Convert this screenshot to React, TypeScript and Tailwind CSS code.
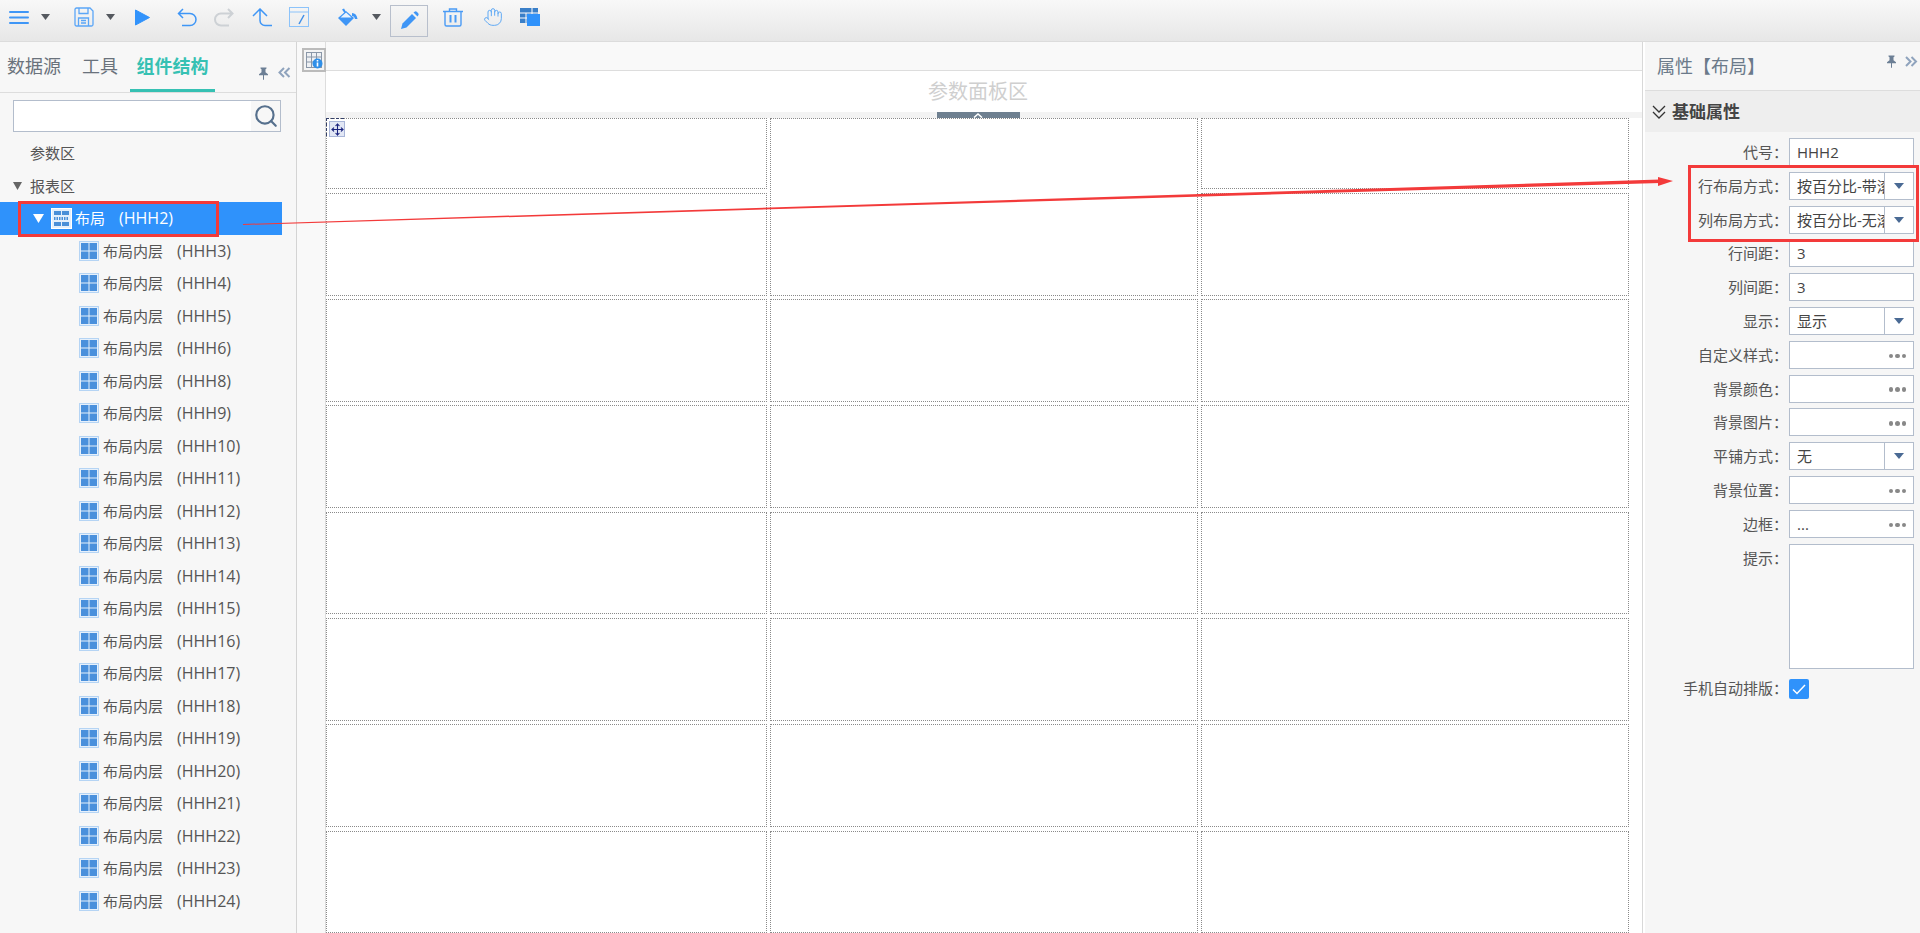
import { Hand, Move, Search } from "lucide-react";

const innerIds = [3, 4, 5, 6, 8, 9, 10, 11, 12, 13, 14, 15, 16, 17, 18, 19, 20, 21, 22, 23, 24];

function Caret({ color = "#55595f", w = 9, h = 6 }: { color?: string; w?: number; h?: number }) {
  return (
    <svg width={w} height={h} viewBox="0 0 10 6" preserveAspectRatio="none" className="block shrink-0">
      <polygon points="0,0 10,0 5,6" fill={color} />
    </svg>
  );
}

function PinIcon({ color }: { color: string }) {
  return (
    <svg width="11" height="13" viewBox="0 0 11 13" className="block">
      <path d="M2.5 0.5h6v1l-1 .8v3l2.5 2v1H6v4.2l-.5.5-.5-.5V8.300H1v-1l2.500-2v-3l-1-.8z" fill={color} />
    </svg>
  );
}

function DoubleArrow({ dir }: { dir: "left" | "right" }) {
  const d = dir === "left" ? "M6 1 L1.500 5.500 L6 10 M11.500 1 L7 5.500 L11.500 10" : "M1 1 L5.500 5.500 L1 10 M6.500 1 L11 5.500 L6.500 10";
  return (
    <svg width="13" height="11" viewBox="0 0 13 11" fill="none" stroke="#8fa3bd" strokeWidth="2" className="block">
      <path d={d} />
    </svg>
  );
}

function LayerIcon() {
  return (
    <svg width="20" height="20" viewBox="0 0 20 20" className="block shrink-0">
      <rect x="0.500" y="0.500" width="19" height="19" fill="#e6f0fb" stroke="#7db4ee" strokeDasharray="1 1" />
      <rect x="2" y="2" width="7.500" height="7.500" fill="#4a90dc" />
      <rect x="10.500" y="2" width="7.500" height="7.500" fill="#4a90dc" />
      <rect x="2" y="10.500" width="7.500" height="7.500" fill="#4a90dc" />
      <rect x="10.500" y="10.500" width="7.500" height="7.500" fill="#4a90dc" />
    </svg>
  );
}

function RootIcon() {
  return (
    <svg width="21" height="21" viewBox="0 0 21 21" className="block shrink-0">
      <rect x="0.500" y="0.500" width="20" height="20" fill="#e4effb" stroke="#ffffff" />
      <rect x="3" y="3" width="7" height="4" fill="#4a8fd8" />
      <rect x="11" y="3" width="7" height="4" fill="#4a8fd8" />
      <path d="M3 10.500h15" stroke="#4a8fd8" strokeWidth="3" strokeDasharray="1.500 1" />
      <rect x="3" y="14" width="7" height="4" fill="#4a8fd8" />
      <rect x="11" y="14" width="7" height="4" fill="#4a8fd8" />
    </svg>
  );
}

function Toolbar() {
  return (
    <div className="flex h-[42px] shrink-0 items-center border-b border-[#dcdcdc] bg-gradient-to-b from-[#f8f8f8] to-[#e7e7e7] pl-[9px] pb-[7px]">
      <svg width="20" height="13" viewBox="0 0 20 13" className="block">
        <rect y="0" width="20" height="2" rx="1" fill="#3f96f6" />
        <rect y="5.500" width="20" height="2" rx="1" fill="#3f96f6" />
        <rect y="11" width="20" height="2" rx="1" fill="#3f96f6" />
      </svg>
      <div className="ml-[12px]"><Caret /></div>
      <svg width="20" height="20" viewBox="0 0 20 20" fill="none" className="ml-[24px] block" stroke="#5ba6f7" strokeWidth="1.300">
        <path d="M1 2.500a1.500 1.500 0 0 1 1.500-1.500h13.500l3 3v13.500a1.500 1.500 0 0 1-1.500 1.500h-15a1.500 1.500 0 0 1-1.500-1.500z" />
        <path d="M5 1v5.500h9V1M4.500 19v-8h10v8M7 13.500h5M7 16h5" />
      </svg>
      <div className="ml-[12px]"><Caret /></div>
      <svg width="15" height="17" viewBox="0 0 15 17" className="ml-[20px] block">
        <path d="M0.500 1 L14.500 8.500 L0.500 16 Z" fill="#3293fb" stroke="#3293fb" strokeLinejoin="round" />
      </svg>
      <svg width="20" height="19" viewBox="0 0 20 19" fill="none" stroke="#3f96f6" strokeWidth="1.500" className="ml-[27px] block">
        <path d="M6 1 L1.500 5.500 L6 10 M1.500 5.500 H13 a6 6 0 0 1 0 12 H5" />
      </svg>
      <svg width="20" height="19" viewBox="0 0 20 19" fill="none" stroke="#cdd1d5" strokeWidth="2" className="ml-[17px] block">
        <path d="M14 1 L18.500 5.500 L14 10 M18.500 5.500 H7 a6 6 0 0 0 0 12 H15" />
      </svg>
      <svg width="20" height="19" viewBox="0 0 20 19" fill="none" stroke="#3f96f6" strokeWidth="1.500" className="ml-[18px] block">
        <path d="M1 8 L8 1 L15 8 M8 1 V12.500 a5 5 0 0 0 5 5 H20" />
      </svg>
      <svg width="20" height="20" viewBox="0 0 20 20" fill="none" className="ml-[17px] block">
        <rect x="0.500" y="0.500" width="19" height="19" stroke="#8cc3fa" />
        <path d="M0.500 5h19" stroke="#8cc3fa" />
        <path d="M10 17 L15 8" stroke="#3f8fe8" strokeWidth="1.500" />
      </svg>
      <svg width="21" height="19" viewBox="0 0 21 19" className="ml-[28px] block">
        <path d="M1 10 L9 3 L17 10 L9 18 Z" fill="#3f96f6" />
        <path d="M3.500 9.500h11L9 4.500z" fill="#e9f3fe" />
        <path d="M5 1.500 L7 0.500 L9 4 L7.500 5z" fill="#3f96f6" />
        <path d="M15 5 C18 5 20 7 20.500 11 L18 11 C17.500 9 16.500 8 15 8z" fill="#3f96f6" />
      </svg>
      <div className="ml-[14px]"><Caret /></div>
      <div className="ml-[9px] mt-[7px] flex h-[32px] w-[38px] items-center justify-center border border-[#b8bfcc]">
        <svg width="19" height="19" viewBox="0 0 19 19" className="block">
          <path d="M1 18 L2.500 12.500 L12 3 L16 7 L6.500 16.500 Z" fill="#3f96f6" />
          <path d="M13.500 1.500 L15 0.500 Q16 0 17 1 L18 2 Q19 3 18.500 4 L17.500 5.500 Z" fill="#3f96f6" />
        </svg>
      </div>
      <svg width="20" height="19" viewBox="0 0 20 19" fill="none" stroke="#4a9bf5" strokeWidth="1.400" className="ml-[15px] block">
        <path d="M0 3.500h20M6.500 3.500V1h7v2.500M2 3.500v13a1.500 1.500 0 0 0 1.500 1.500h13a1.500 1.500 0 0 0 1.500-1.500v-13" />
        <path d="M7.500 7v7.500M12.500 7v7.500" strokeWidth="2" />
      </svg>
      <Hand size={20} strokeWidth={1.200} color="#5fa9f5" className="ml-[20px] block" />
      <svg width="20" height="18" viewBox="0 0 20 18" className="ml-[17px] block">
        <rect x="0" y="0" width="18" height="15" fill="#3a7fc8" />
        <path d="M0 5h18M0 10h7M6 5v10M12 0v6" stroke="#ffffff" strokeWidth="1" />
        <rect x="7" y="6" width="13" height="12" fill="#2f92fb" />
      </svg>
    </div>
  );
}

function LeftPanel() {
  return (
    <div className="flex w-[297px] shrink-0 flex-col border-r border-[#d4d4d4] bg-[#f7f7f7]">
      <div className="relative flex h-[51px] shrink-0 border-b border-[#dddddd] pl-[7px] text-[18px] text-[#6a727c]">
        <div className="pt-[11px]">数据源</div>
        <div className="ml-[21px] pt-[11px]">工具</div>
        <div className="ml-[12px] h-[50px] w-[85px] border-b-[3px] border-[#36c1b3] pt-[11px] text-center font-bold text-[#36c1b3]">组件结构</div>
        <div className="absolute left-[258px] top-[25px]"><PinIcon color="#6c7f95" /></div>
        <div className="absolute left-[278px] top-[25px]"><DoubleArrow dir="left" /></div>
      </div>
      <div className="mx-[13px] mt-[7px] flex h-[32px] w-[268px] shrink-0 border border-[#b3bdcc] bg-white">
        <div className="flex-1" />
        <div className="flex w-[29px] items-center justify-center bg-[#f7f7f7]">
          <Search size={26} strokeWidth={2} color="#56708d" />
        </div>
      </div>
      <div className="mt-[5px] text-[15px] leading-[32.500px] text-[#555555]">
        <div className="h-[32.500px] pl-[30px]">参数区</div>
        <div className="flex h-[32.500px] items-center pl-[13px] pt-[1px]">
          <Caret color="#666666" w={9} h={8} />
          <span className="ml-[8px]">报表区</span>
        </div>
        <div className="flex h-[32.500px] w-[282px] items-center bg-[#2f92fb] pl-[33px] text-white">
          <Caret color="#ffffff" w={11} h={9} />
          <div className="ml-[7px]"><RootIcon /></div>
          <span className="ml-[3px]">布局</span>
          <span className="ml-[14px] text-[16px]">(HHH2)</span>
        </div>
        {innerIds.map((id) => (
          <div key={id} className="flex h-[32.500px] items-center pl-[79px]">
            <LayerIcon />
            <span className="ml-[4px]">布局内层</span>
            <span className="ml-[14px] text-[16px]">(HHH{id})</span>
          </div>
        ))}
      </div>
    </div>
  );
}

function Canvas() {
  const cells = Array.from({ length: 18 });
  return (
    <div className="flex min-w-0 flex-1 border-r border-[#d8d8d8]">
      <div className="w-[29px] shrink-0 border-r border-[#dddddd] bg-[#f9f9f9] pl-[5px] pt-[6px]">
        <div className="flex h-[24px] w-[24px] items-center justify-center border-2 border-[#bbbbbb] bg-[#f4f4f4]">
          <svg width="17" height="17" viewBox="0 0 17 17" className="block">
            <rect x="0.500" y="0.500" width="15" height="15" fill="#eef0f3" stroke="#8a97a8" />
            <path d="M0.500 5h15M0.500 10h15M5.500 0.500v15M10.500 0.500v15" stroke="#8a97a8" />
            <circle cx="11.500" cy="11.500" r="5" fill="#2f8fe8" />
            <rect x="10.700" y="10.500" width="1.600" height="4" fill="#ffffff" />
            <rect x="10.700" y="8" width="1.600" height="1.500" fill="#ffffff" />
          </svg>
        </div>
      </div>
      <div className="relative min-w-0 flex-1 overflow-hidden bg-white">
        <div className="h-[29px] border-b border-[#dddddd] bg-[#f9f9f9]" />
        <div className="flex h-[41px] items-center justify-center pr-[12px] text-[20px] text-[#cfcfcf]">参数面板区</div>
        <div className="flex h-[6px] justify-center bg-[#f3f3f3] pr-[12px]">
          <div className="flex h-[6px] w-[83px] justify-center overflow-hidden bg-[#6f8090]">
            <svg width="10" height="6" viewBox="0 0 10 6" className="block">
              <path d="M1 5.500 L5 2 L9 5.500" fill="none" stroke="#ffffff" strokeWidth="1.600" />
            </svg>
          </div>
        </div>
        <div className="grid grid-cols-[441px_428px_428px] grid-rows-[71px_103px_repeat(6,102.700px)] gap-x-[3px] gap-y-[3.600px]">
          <div className="border border-dotted border-[#8a8a8a]" />
          <div className="row-span-2 border border-dotted border-[#8a8a8a]" />
          <div className="border border-dotted border-[#8a8a8a]" />
          <div className="border border-dotted border-[#8a8a8a]" />
          <div className="border border-dotted border-[#8a8a8a]" />
          {cells.map((_, i) => (
            <div key={i} className="border border-dotted border-[#8a8a8a]" />
          ))}
        </div>
        <div className="absolute left-0 top-[76px] h-[18px] w-[18px] border-l border-t border-dashed border-[#34406a]" />
        <div className="absolute left-[3px] top-[79px] flex h-[16px] w-[16px] items-center justify-center border border-[#a8b5d8] bg-[#e2e7f5]">
          <Move size={13} strokeWidth={2} color="#1a237e" />
        </div>
      </div>
    </div>
  );
}

function Field({ label, children }: { label: string; children?: React.ReactNode }) {
  return (
    <div className="mb-[5.800px] flex">
      <div className="w-[143px] shrink-0 pt-[2px] text-right text-[15px] leading-[24px] text-[#555555]">{label}：</div>
      <div className="ml-[1px]">{children}</div>
    </div>
  );
}

function TextBox({ value }: { value: string }) {
  return (
    <div className="h-[28px] w-[125px] border border-[#b3bdcc] bg-white pl-[7px] text-[15px] leading-[26px] text-[#444444]">{value}</div>
  );
}

function SelectBox({ value }: { value: string }) {
  return (
    <div className="flex h-[28px] w-[125px] border border-[#b3bdcc] bg-white text-[15px] leading-[26px] text-[#444444]">
      <div className="w-[94px] shrink-0 overflow-hidden whitespace-nowrap pl-[7px]">{value}</div>
      <div className="flex flex-1 items-center justify-center border-l border-[#b3bdcc]">
        <Caret color="#4a6a94" w={10} h={6} />
      </div>
    </div>
  );
}

function DotsBox({ value = "" }: { value?: string }) {
  return (
    <div className="flex h-[28px] w-[125px] items-center justify-between border border-[#b3bdcc] bg-white pl-[7px] pr-[7px] text-[15px] leading-[24px] text-[#444444]">
      <span>{value}</span>
      <span className="flex gap-[2px] pt-[2px]">
        <span className="h-[4.500px] w-[4.500px] rounded-full bg-[#888888]" />
        <span className="h-[4.500px] w-[4.500px] rounded-full bg-[#888888]" />
        <span className="h-[4.500px] w-[4.500px] rounded-full bg-[#888888]" />
      </span>
    </div>
  );
}

function RightPanel() {
  return (
    <div className="flex w-[277px] shrink-0 flex-col border-l-2 border-white bg-[#f6f6f6]">
      <div className="relative h-[49px] shrink-0 border-b border-[#dddddd] pl-[12px] pt-[12px] text-[18px] leading-[24px] text-[#6b7a8a]">
        属性【布局】
        <div className="absolute left-[241px] top-[13px]"><PinIcon color="#6c7f95" /></div>
        <div className="absolute left-[260px] top-[14px]"><DoubleArrow dir="right" /></div>
      </div>
      <div className="flex h-[41px] shrink-0 items-center bg-[#eeeeee] pl-[7px] text-[17px] font-bold text-[#444444]">
        <svg width="14" height="14" viewBox="0 0 14 14" fill="none" stroke="#333333" strokeWidth="1.300" className="block">
          <path d="M1 1 L7 7 L13 1 M1 7 L7 13 L13 7" />
        </svg>
        <span className="ml-[6px]">基础属性</span>
      </div>
      <div className="pt-[6px]">
        <Field label="代号"><TextBox value="HHH2" /></Field>
        <Field label="行布局方式"><SelectBox value="按百分比-带滚动条" /></Field>
        <Field label="列布局方式"><SelectBox value="按百分比-无滚动条" /></Field>
        <Field label="行间距"><TextBox value="3" /></Field>
        <Field label="列间距"><TextBox value="3" /></Field>
        <Field label="显示"><SelectBox value="显示" /></Field>
        <Field label="自定义样式"><DotsBox /></Field>
        <Field label="背景颜色"><DotsBox /></Field>
        <Field label="背景图片"><DotsBox /></Field>
        <Field label="平铺方式"><SelectBox value="无" /></Field>
        <Field label="背景位置"><DotsBox /></Field>
        <Field label="边框"><DotsBox value="..." /></Field>
        <Field label="提示">
          <div className="h-[125px] w-[125px] border border-[#b3bdcc] bg-white" />
        </Field>
        <Field label="手机自动排版">
          <div className="mt-[5px] flex h-[20px] w-[20px] items-center justify-center rounded-[2px] bg-[#2f92fb]">
            <svg width="14" height="11" viewBox="0 0 14 11" className="block">
              <path d="M1 5.500 L5 9.500 L13 1" fill="none" stroke="#ffffff" strokeWidth="1.500" />
            </svg>
          </div>
        </Field>
      </div>
    </div>
  );
}

export default function App() {
  return (
    <div className="relative flex h-[933px] w-[1920px] flex-col overflow-hidden bg-white font-['Open_Sans','Noto_Sans_CJK_SC',sans-serif]">
      <Toolbar />
      <div className="flex min-h-0 flex-1">
        <LeftPanel />
        <Canvas />
        <RightPanel />
      </div>
      {/* annotations drawn on top of the screenshot */}
      <div className="pointer-events-none absolute left-[18px] top-[201px] h-[36px] w-[201px] border-[3px] border-[#f33a3a]" />
      <div className="pointer-events-none absolute left-[1688px] top-[165px] h-[77px] w-[231px] border-[3px] border-[#f33a3a]" />
      <svg width="1920" height="933" viewBox="0 0 1920 933" className="pointer-events-none absolute left-0 top-0">
        <polygon points="243,224 1660,179.500 1660,183 243,225" fill="#f33a3a" />
        <polygon points="1658,177 1673,181 1658,186" fill="#f33a3a" />
      </svg>
    </div>
  );
}
